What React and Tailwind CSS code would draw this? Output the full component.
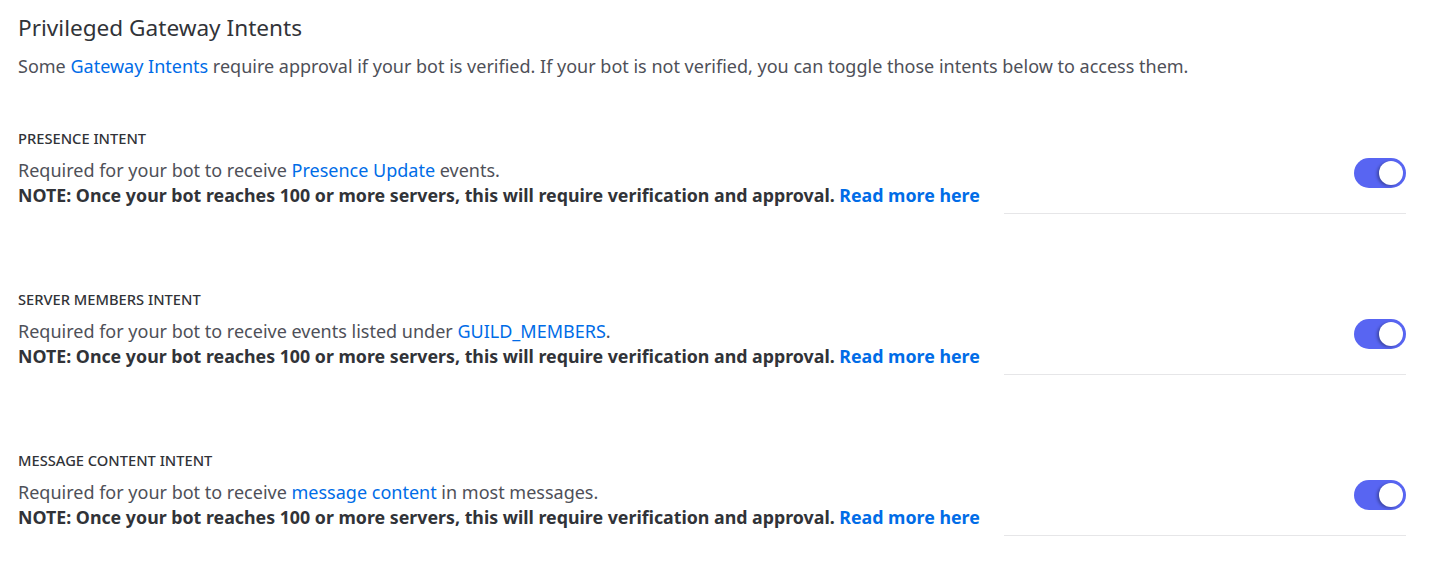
import React from 'react';

const Toggle = () => (
  <div className="w-[52px] h-[30px] rounded-full bg-[#5865f2] flex items-center justify-end pr-[3px]">
    <div className="w-[24px] h-[24px] rounded-full bg-white shadow-[-2px_1px_3px_rgba(0,0,0,0.3)]"></div>
  </div>
);

const Link = ({ children, bold }) => (
  <a href="#" className={`text-[#006ce7] ${bold ? 'font-bold' : ''}`}>{children}</a>
);

const Intent = ({ label, children }) => (
  <section className="mb-[77px]">
    <h3 className="text-[14.7px] leading-[16px] font-medium uppercase text-[#313338]">{label}</h3>
    <div className="flex mt-3">
      <div className="flex-1 leading-[25px]">
        <div className="text-[18px] text-[#4e5058]">{children}</div>
        <div className="text-[17.8px] font-bold text-[#313338]">
          NOTE: Once your bot reaches 100 or more servers, this will require verification and approval. <Link bold>Read more here</Link>
        </div>
      </div>
      <div className="w-[402px] flex flex-col items-end">
        <Toggle />
        <div className="w-full h-px bg-[#e6e6e8] mt-[25px]"></div>
      </div>
    </div>
  </section>
);

export default function App() {
  return (
    <div className="min-h-screen bg-white pl-[18px] pr-[31px] pt-[14px] font-['Noto_Sans',sans-serif]">
      <h2 className="text-[22.6px] leading-[28px] font-normal text-[#313338]">Privileged Gateway Intents</h2>
      <p className="mt-3 text-[18px] leading-[24px] text-[#4e5058]">
        Some <Link>Gateway Intents</Link> require approval if your bot is verified. If your bot is not verified, you can toggle those intents below to access them.
      </p>
      <div className="mt-[52px]">
        <Intent label="Presence Intent">
          Required for your bot to receive <Link>Presence Update</Link> events.
        </Intent>
        <Intent label="Server Members Intent">
          Required for your bot to receive events listed under <Link>GUILD_MEMBERS</Link>.
        </Intent>
        <Intent label="Message Content Intent">
          Required for your bot to receive <Link>message content</Link> in most messages.
        </Intent>
      </div>
    </div>
  );
}
